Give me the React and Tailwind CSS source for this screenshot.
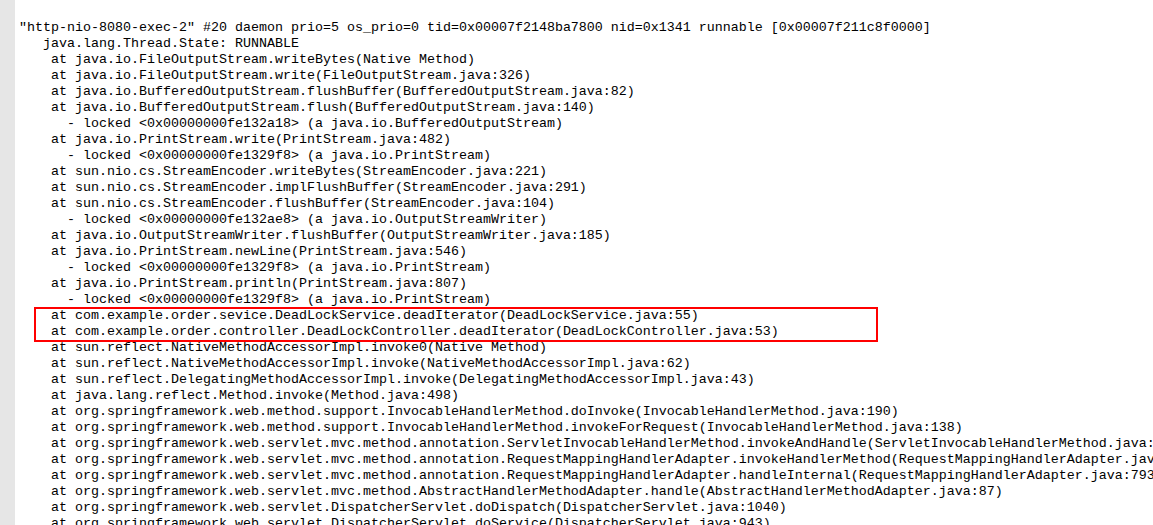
const lines = [
  '"http-nio-8080-exec-2" #20 daemon prio=5 os_prio=0 tid=0x00007f2148ba7800 nid=0x1341 runnable [0x00007f211c8f0000]',
  "   java.lang.Thread.State: RUNNABLE",
  "    at java.io.FileOutputStream.writeBytes(Native Method)",
  "    at java.io.FileOutputStream.write(FileOutputStream.java:326)",
  "    at java.io.BufferedOutputStream.flushBuffer(BufferedOutputStream.java:82)",
  "    at java.io.BufferedOutputStream.flush(BufferedOutputStream.java:140)",
  "      - locked <0x00000000fe132a18> (a java.io.BufferedOutputStream)",
  "    at java.io.PrintStream.write(PrintStream.java:482)",
  "      - locked <0x00000000fe1329f8> (a java.io.PrintStream)",
  "    at sun.nio.cs.StreamEncoder.writeBytes(StreamEncoder.java:221)",
  "    at sun.nio.cs.StreamEncoder.implFlushBuffer(StreamEncoder.java:291)",
  "    at sun.nio.cs.StreamEncoder.flushBuffer(StreamEncoder.java:104)",
  "      - locked <0x00000000fe132ae8> (a java.io.OutputStreamWriter)",
  "    at java.io.OutputStreamWriter.flushBuffer(OutputStreamWriter.java:185)",
  "    at java.io.PrintStream.newLine(PrintStream.java:546)",
  "      - locked <0x00000000fe1329f8> (a java.io.PrintStream)",
  "    at java.io.PrintStream.println(PrintStream.java:807)",
  "      - locked <0x00000000fe1329f8> (a java.io.PrintStream)",
  "    at com.example.order.sevice.DeadLockService.deadIterator(DeadLockService.java:55)",
  "    at com.example.order.controller.DeadLockController.deadIterator(DeadLockController.java:53)",
  "    at sun.reflect.NativeMethodAccessorImpl.invoke0(Native Method)",
  "    at sun.reflect.NativeMethodAccessorImpl.invoke(NativeMethodAccessorImpl.java:62)",
  "    at sun.reflect.DelegatingMethodAccessorImpl.invoke(DelegatingMethodAccessorImpl.java:43)",
  "    at java.lang.reflect.Method.invoke(Method.java:498)",
  "    at org.springframework.web.method.support.InvocableHandlerMethod.doInvoke(InvocableHandlerMethod.java:190)",
  "    at org.springframework.web.method.support.InvocableHandlerMethod.invokeForRequest(InvocableHandlerMethod.java:138)",
  "    at org.springframework.web.servlet.mvc.method.annotation.ServletInvocableHandlerMethod.invokeAndHandle(ServletInvocableHandlerMethod.java:106)",
  "    at org.springframework.web.servlet.mvc.method.annotation.RequestMappingHandlerAdapter.invokeHandlerMethod(RequestMappingHandlerAdapter.java:888)",
  "    at org.springframework.web.servlet.mvc.method.annotation.RequestMappingHandlerAdapter.handleInternal(RequestMappingHandlerAdapter.java:793)",
  "    at org.springframework.web.servlet.mvc.method.AbstractHandlerMethodAdapter.handle(AbstractHandlerMethodAdapter.java:87)",
  "    at org.springframework.web.servlet.DispatcherServlet.doDispatch(DispatcherServlet.java:1040)",
  "    at org.springframework.web.servlet.DispatcherServlet.doService(DispatcherServlet.java:943)",
];

// only the descenders of this line show at the top edge
const clippedLine = "      java.logHandler.ca, Takenplace.s)";

export default function App() {
  return (
    <div className="flex h-[525px] w-full overflow-hidden bg-white">
      <div className="w-[15px] shrink-0 bg-[#e6e6e6]" />
      <div
        className="relative flex-1 overflow-hidden pl-[4px] text-[13.33px] leading-[16px] text-black whitespace-pre"
        style={{ fontFamily: '"Liberation Mono", "Courier New", monospace' }}
      >
        <div className="-mt-[15px] h-[16px]">{clippedLine}</div>
        <div className="h-[19px]" />
        {lines.map((line, i) => (
          <div key={i} className="h-[16px]">
            {line}
          </div>
        ))}
        {/* highlight box */}
        <div className="absolute left-[19px] top-[307px] h-[35px] w-[844px] border-2 border-[#ff0000]" />
      </div>
    </div>
  );
}
